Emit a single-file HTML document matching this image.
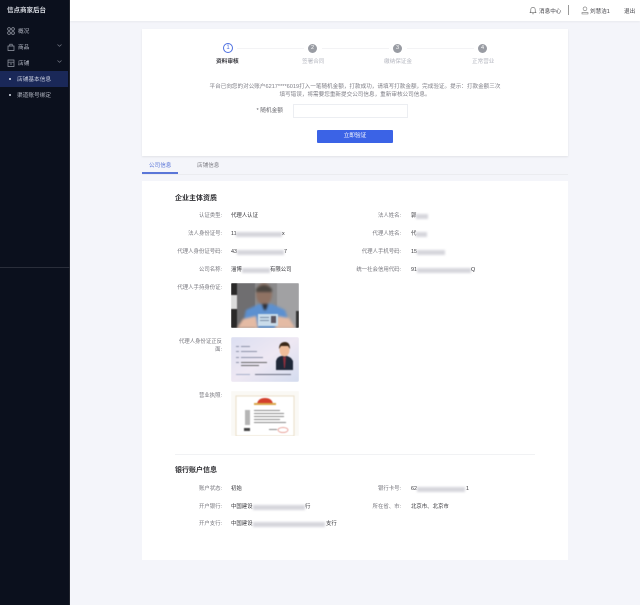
<!DOCTYPE html>
<html lang="zh"><head><meta charset="utf-8"><title>信点商家后台</title>
<style>
html,body{margin:0;padding:0}
body{width:640px;height:605px;position:relative;overflow:hidden;background:#f4f5fa;font-family:"Liberation Sans","Noto Sans CJK SC",sans-serif;color:#555}
.a,.l,.v{position:absolute;white-space:nowrap;line-height:8px;font-size:5.4px}
.t{filter:blur(.25px)}
.l{text-align:right;color:#77777e;filter:blur(.3px);margin-top:.7px}
.v{color:#333338;filter:blur(.3px);margin-top:.7px}
.m{position:absolute;height:5px;background:#d6d6dc;filter:blur(1px);margin-top:.7px}
.card{position:absolute;left:142px;width:426px;background:#fff}
svg{position:absolute;overflow:visible}
.n{color:#b5b7c0;font-size:5.6px;filter:blur(.25px)}
.dot{position:absolute;width:2px;height:2px;background:#dfe3f0;border-radius:50%}
.circ{position:absolute;width:9px;height:9px;border-radius:50%;background:#999ca3;color:#fff;font-size:5.5px;line-height:9px;text-align:center;filter:blur(.25px)}
.side{color:#b4b8c4;font-size:5.7px;filter:blur(.25px)}
.img{filter:blur(.6px)}
</style></head><body>

<div class="a" style="left:0;top:0;width:70px;height:605px;background:#0b101d"></div>
<div class="a" style="left:69px;top:0;width:1px;height:605px;background:#23262f"></div>
<div class="a" style="left:0;top:267px;width:70px;height:1px;background:#2a2e3a"></div>
<div class="a" style="left:0;top:71px;width:68px;height:16px;background:#1a2858"></div>
<div class="a t" style="left:7px;top:6.5px;color:#d5d8df;font-size:6.5px;font-weight:bold">信点商家后台</div>

<svg style="left:7px;top:27px" width="8" height="8" viewBox="0 0 8 8" fill="none" stroke="#9a9eaa" stroke-width=".7"><circle cx="2" cy="2" r="1.4"/><circle cx="6" cy="2" r="1.4"/><circle cx="2" cy="6" r="1.4"/><circle cx="6" cy="6" r="1.4"/></svg>
<div class="a side" style="left:18px;top:27.500px">概况</div>
<svg style="left:7px;top:43px" width="8" height="8" viewBox="0 0 8 8" fill="none" stroke="#9a9eaa" stroke-width=".7"><path d="M1 3h6v4.500H1zM2.800 3V1.200h2.400V3"/></svg>
<div class="a side" style="left:18px;top:43.500px">商品</div>
<svg style="left:57px;top:44px" width="5" height="3" viewBox="0 0 5 3" fill="none" stroke="#7c808c" stroke-width=".6"><path d="M.5.5 2.500 2.300 4.500.5"/></svg>
<svg style="left:7px;top:59px" width="8" height="8" viewBox="0 0 8 8" fill="none" stroke="#9a9eaa" stroke-width=".7"><path d="M1 1h6v6.500H1zM1 3.200h6M3 5h2"/></svg>
<div class="a side" style="left:18px;top:59.500px">店铺</div>
<svg style="left:57px;top:60px" width="5" height="3" viewBox="0 0 5 3" fill="none" stroke="#7c808c" stroke-width=".6"><path d="M.5.5 2.500 2.300 4.500.5"/></svg>
<div class="dot" style="left:9px;top:78px"></div>
<div class="a side" style="left:17px;top:75.500px;color:#c6cbdc">店铺基本信息</div>
<div class="dot" style="left:9px;top:94px"></div>
<div class="a side" style="left:17px;top:91.500px">渠道账号绑定</div>

<div class="a" style="left:70px;top:0;width:570px;height:21px;background:#fff;box-shadow:0 1px 2px rgba(0,0,0,.05)"></div>
<svg style="left:529px;top:6px" width="8" height="9" viewBox="0 0 8 9" fill="none" stroke="#666" stroke-width=".6"><path d="M1 6.700h6L6.200 5.400V3.500a2.200 2.200 0 0 0-4.400 0v1.900zM3.200 7.800h1.600"/></svg>
<div class="a t" style="left:539px;top:7.500px;color:#3c3c42;font-size:5.6px">消息中心</div>
<div class="a" style="left:568px;top:5px;width:1px;height:10px;background:#999"></div>
<svg style="left:581px;top:6px" width="8" height="9" viewBox="0 0 8 9" fill="none" stroke="#777" stroke-width=".6"><circle cx="4" cy="2.800" r="1.900"/><path d="M1 8V6.600h6V8z"/></svg>
<div class="a t" style="left:590px;top:7.500px;color:#3c3c42;font-size:5.6px">刘慧洁1</div>
<div class="a t" style="left:624px;top:7.500px;color:#3c3c42;font-size:5.6px">退出</div>

<div class="card" style="top:29px;height:127px;box-shadow:0 1px 2px rgba(0,0,0,.08)"></div>
<div class="a" style="left:223px;top:43px;width:10px;height:10px;border-radius:50%;border:1px solid #4d6fe0;box-sizing:border-box;color:#4d6fe0;font-size:6px;line-height:8px;text-align:center">1</div>
<div class="a" style="left:237px;top:48px;width:67px;height:1px;background:#f3f3f5"></div>
<div class="a" style="left:322px;top:48px;width:67px;height:1px;background:#f3f3f5"></div>
<div class="a" style="left:407px;top:48px;width:67px;height:1px;background:#f3f3f5"></div>
<div class="circ" style="left:308px;top:44px">2</div>
<div class="circ" style="left:393px;top:44px">3</div>
<div class="circ" style="left:478px;top:44px">4</div>
<div class="a t" style="left:216px;top:57.700px;color:#3a3a40;font-size:5.7px;font-weight:bold">资料审核</div>
<div class="a n" style="left:302px;top:57.700px">签署合同</div>
<div class="a n" style="left:384px;top:57.700px">缴纳保证金</div>
<div class="a n" style="left:472px;top:57.700px">正常营业</div>

<div class="a t" style="left:142px;width:426px;top:83px;text-align:center;color:#7d7d85;font-size:5.6px">平台已向您的对公账户6217****6019打入一笔随机金额，打款成功，请填写打款金额，完成验证。提示：打款金额三次</div>
<div class="a t" style="left:142px;width:426px;top:91px;text-align:center;color:#7d7d85;font-size:5.6px">填写错误，将需要您重新提交公司信息，重新审核公司信息。</div>
<div class="a t" style="left:240px;width:43px;top:107px;text-align:right;color:#66666c;font-size:5.7px">* 随机金额</div>
<div class="a" style="left:293px;top:104px;width:115px;height:14px;border:1px solid #eceef2;box-sizing:border-box;background:#fff"></div>
<div class="a" style="left:317px;top:130px;width:76px;height:13px;background:#3b63e6;border-radius:1px;color:#fff;text-align:center;line-height:13px;font-size:5.7px">立即验证</div>

<div class="a t" style="left:149px;top:161.500px;color:#5a76d8;font-size:5.6px">公司信息</div>
<div class="a t" style="left:197px;top:161.500px;color:#7f7f86;font-size:5.6px">店铺信息</div>
<div class="a" style="left:142px;top:172px;width:36px;height:2px;background:#5a76d8"></div>
<div class="a" style="left:142px;top:174px;width:426px;height:1px;background:#ebecf0"></div>

<div class="card" style="top:181px;height:379px"></div>
<div class="a t" style="left:175px;top:195px;color:#2c2c30;font-size:7px;font-weight:bold">企业主体资质</div>

<div class="l" style="left:160px;width:62px;top:211px">认证类型:</div><div class="v" style="left:231px;top:211px">代理人认证</div>
<div class="l" style="left:340px;width:61px;top:211px">法人姓名:</div><div class="v" style="left:411px;top:211px">郭</div><div class="m" style="left:416px;top:213px;width:12px"></div>
<div class="l" style="left:160px;width:62px;top:229px">法人身份证号:</div><div class="v" style="left:231px;top:229px">11</div><div class="m" style="left:236px;top:231px;width:46px"></div><div class="v" style="left:282px;top:229px">x</div>
<div class="l" style="left:340px;width:61px;top:229px">代理人姓名:</div><div class="v" style="left:411px;top:229px">代</div><div class="m" style="left:416px;top:231px;width:11px"></div>
<div class="l" style="left:160px;width:62px;top:247px">代理人身份证号码:</div><div class="v" style="left:231px;top:247px">43</div><div class="m" style="left:237px;top:249px;width:47px"></div><div class="v" style="left:284px;top:247px">7</div>
<div class="l" style="left:340px;width:61px;top:247px">代理人手机号码:</div><div class="v" style="left:411px;top:247px">15</div><div class="m" style="left:417px;top:249px;width:28px"></div>
<div class="l" style="left:160px;width:62px;top:265px">公司名称:</div><div class="v" style="left:231px;top:265px">淄博</div><div class="m" style="left:242px;top:267px;width:28px"></div><div class="v" style="left:270px;top:265px">有限公司</div>
<div class="l" style="left:340px;width:61px;top:265px">统一社会信用代码:</div><div class="v" style="left:411px;top:265px">91</div><div class="m" style="left:417px;top:267px;width:54px"></div><div class="v" style="left:471px;top:265px">Q</div>

<div class="l" style="left:160px;width:62px;top:283px">代理人手持身份证:</div>
<div class="a" style="left:231px;top:283px;width:68px;height:45px;overflow:hidden;border-radius:1px">
<svg class="img" width="68" height="45" viewBox="0 0 68 45" style="left:0;top:0">
<rect width="68" height="45" fill="#8b8a8b"/><rect width="6" height="45" fill="#2a2929"/><rect x="6" width="18" height="45" fill="#6f6e70"/><rect x="46" width="22" height="45" fill="#a1a1a3"/><rect x="65" y="28" width="3" height="17" fill="#333"/><rect y="12" width="6" height="14" fill="#dcdcdc"/>
<g style="filter:blur(1px)"><path d="M11 45 15 27 28 21H41L54 27 60 45z" fill="#5c90d0"/><ellipse cx="33" cy="11" rx="8" ry="11" fill="#8f7263"/><path d="M25 6Q33-2 41 6V9H25z" fill="#4a4540"/><path d="M31 21h6l-2 6h-2z" fill="#2a2a30"/>
<path d="M6 45 12 36 25 33 27 45zM44 45 46 33 58 35 64 45z" fill="#e4bba4"/></g>
<rect x="27" y="31" width="20" height="12" fill="#c9dcea"/><rect x="40" y="33" width="5" height="7" fill="#5a5560"/><rect x="29" y="34" width="9" height="1" fill="#7a8ea5"/><rect x="29" y="37" width="9" height="1" fill="#7a8ea5"/>
</svg></div>

<div class="l" style="left:160px;width:62px;top:337px">代理人身份证正反</div>
<div class="l" style="left:160px;width:62px;top:345px">面:</div>
<div class="a" style="left:231px;top:337px;width:68px;height:45px;overflow:hidden;border-radius:2px">
<svg class="img" width="68" height="45" viewBox="0 0 68 45" style="left:0;top:0">
<defs><linearGradient id="g" x1="0" y1="0" x2="1" y2="1"><stop offset="0" stop-color="#dcdff2"/><stop offset=".5" stop-color="#eee8f3"/><stop offset="1" stop-color="#d4dcef"/></linearGradient></defs>
<rect width="68" height="45" fill="url(#g)"/>
<g fill="#8d92a8"><rect x="5" y="9" width="3" height="1"/><rect x="10" y="9" width="9" height="1"/><rect x="5" y="14" width="3" height="1"/><rect x="10" y="14" width="16" height="1"/><rect x="5" y="20" width="3" height="1"/><rect x="10" y="20" width="22" height="1"/><rect x="5" y="25" width="3" height="1"/><rect x="10" y="25" width="26" height="1" fill="#666"/><rect x="10" y="28" width="18" height="1" fill="#666"/><rect x="5" y="37" width="14" height="1" fill="#a8b0ca"/><rect x="24" y="37" width="36" height="1" fill="#6d7184"/></g>
<path d="M45 33V24Q46 20 50 19H56Q60 20 62 24V33z" fill="#1f2838"/><path d="M52 20h3l-1 11h-1z" fill="#8c2f3c"/><ellipse cx="53.500" cy="13" rx="5" ry="6.500" fill="#efbd9a"/><path d="M48 12Q48 5 54 5 59 5 59 12L57 9H50z" fill="#3a2818"/>
</svg></div>

<div class="l" style="left:160px;width:62px;top:391px">营业执照:</div>
<div class="a" style="left:231px;top:391px;width:68px;height:45px;overflow:hidden">
<svg class="img" width="68" height="45" viewBox="0 0 68 45" style="left:0;top:0">
<rect width="68" height="45" fill="#faf9f5"/><rect x="5" y="5" width="58" height="40" fill="#fff" stroke="#eadfc8" stroke-width="1"/>
<path d="M26 13Q27 7 34 7 41 7 42 13z" fill="#d4402c"/><rect x="23" y="12" width="22" height="2" fill="#d9a74a"/>
<g fill="#8a8a8a"><rect x="14" y="19" width="5" height="15" fill="#b5b5b5"/><rect x="23" y="19" width="26" height="1"/><rect x="23" y="22" width="30" height="1"/><rect x="23" y="25" width="30" height="1"/><rect x="23" y="28" width="26" height="1"/><rect x="23" y="31" width="32" height="1"/><rect x="13" y="37" width="6" height="3" fill="#444"/><rect x="38" y="38" width="8" height="1"/></g>
<ellipse cx="52" cy="39" rx="5" ry="2.500" fill="none" stroke="#e2877c" stroke-width=".7"/>
</svg></div>

<div class="a" style="left:175px;top:454px;width:360px;height:1px;background:#f1f2f4"></div>
<div class="a t" style="left:175px;top:467px;color:#2c2c30;font-size:7px;font-weight:bold">银行账户信息</div>

<div class="l" style="left:160px;width:62px;top:484px">账户状态:</div><div class="v" style="left:231px;top:484px">初始</div>
<div class="l" style="left:340px;width:61px;top:484px">银行卡号:</div><div class="v" style="left:411px;top:484px">62</div><div class="m" style="left:417px;top:486px;width:48px"></div><div class="v" style="left:466px;top:484px">1</div>
<div class="l" style="left:160px;width:62px;top:502px">开户银行:</div><div class="v" style="left:231px;top:502px">中国建设</div><div class="m" style="left:253px;top:504px;width:52px"></div><div class="v" style="left:305px;top:502px">行</div>
<div class="l" style="left:340px;width:61px;top:502px">所在省、市:</div><div class="v" style="left:411px;top:502px">北京市、北京市</div>
<div class="l" style="left:160px;width:62px;top:519px">开户支行:</div><div class="v" style="left:231px;top:519px">中国建设</div><div class="m" style="left:253px;top:521px;width:72px"></div><div class="v" style="left:326px;top:519px">支行</div>
</body></html>
